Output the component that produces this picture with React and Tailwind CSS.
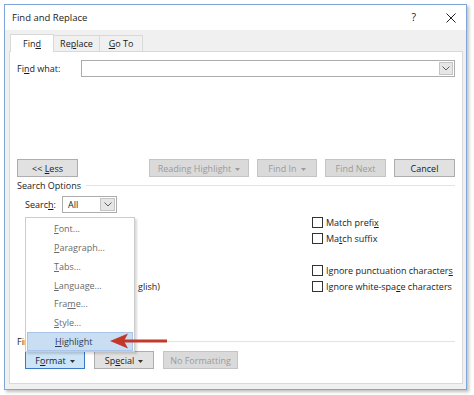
import React from "react";

const U = ({ children }) => <span className="underline underline-offset-[1px]">{children}</span>;

const Caret = ({ color = "#333" }) => (
  <svg width="5" height="3" viewBox="0 0 5 3" className="ml-[4px] inline-block">
    <path d="M0 0 L5 0 L2.5 3 Z" fill={color} />
  </svg>
);

const Chevron = () => (
  <svg width="8" height="5" viewBox="0 0 8 5">
    <path d="M0.5 0.5 L4 4 L7.5 0.5" fill="none" stroke="#606060" strokeWidth="1" />
  </svg>
);

const Button = ({ children, w, disabled, active }) => {
  let cls = "bg-[#e1e1e1] border-[#adadad] text-[#1b1b1b]";
  if (disabled) cls = "bg-[#dadada] border-[#c4c4c4] text-[#9a9a9a]";
  if (active) cls = "bg-[#cce4f7] border-[#3a78c4] text-[#1b1b1b]";
  return (
    <div
      className={`h-[18px] border flex items-center justify-center ${cls}`}
      style={{ width: w }}
    >
      <span className="whitespace-pre">{children}</span>
    </div>
  );
};

const Box = () => <div className="w-[11px] h-[11px] border border-[#333] bg-white shrink-0" />;

const Check = ({ children }) => (
  <div className="h-[16px] flex items-center gap-[3px] whitespace-nowrap">
    <Box />
    <span>{children}</span>
  </div>
);

const menuItems = [
  <><U>F</U>ont...</>,
  <><U>P</U>aragraph...</>,
  <><U>T</U>abs...</>,
  <><U>L</U>anguage...</>,
  <>Fra<U>m</U>e...</>,
  <><U>S</U>tyle...</>,
];

export default function App() {
  return (
    <div
      className="w-[474px] h-[395px] bg-white pt-[4px] pl-[4px] text-[9px] text-[#1b1b1b] leading-none"
      style={{ fontFamily: '"Open Sans", "Noto Sans", sans-serif' }}
    >
      <div className="w-[463px] h-[386px] border border-[#7ea6d8] bg-[#f0f0f0] flex flex-col shadow-[2px_2px_3px_rgba(0,0,0,0.25)]">
        {/* title bar */}
        <div className="h-[25px] bg-white flex items-center pl-[7px] pr-[10px] shrink-0">
          <span className="text-[9.5px]">Find and Replace</span>
          <span className="ml-auto mr-[30px] text-[10.5px]">?</span>
          <svg width="10" height="10" viewBox="0 0 10 10">
            <path d="M0.5 0.5 L9.5 9.5 M9.5 0.5 L0.5 9.5" stroke="#222" strokeWidth="1" />
          </svg>
        </div>

        <div className="flex-1 flex flex-col pl-[4px] pr-[3px] pt-[5px] pb-[5px]">
          {/* tabs */}
          <div className="flex h-[17px] -mb-[1px] pl-[1px] shrink-0">
            <div className="w-[44px] h-[18px] -mt-[1px] bg-white border border-b-0 border-[#d9d9d9] z-10 flex items-center justify-center">
              <span>Fin<U>d</U></span>
            </div>
            <div className="w-[46px] border border-l-0 border-[#d9d9d9] flex items-center justify-center">
              <span>Re<U>p</U>lace</span>
            </div>
            <div className="w-[43px] border border-l-0 border-[#d9d9d9] flex items-center justify-center">
              <span><U>G</U>o To</span>
            </div>
          </div>

          {/* panel */}
          <div className="flex-1 bg-white border border-[#d9d9d9] relative flex flex-col px-[7px] pt-[8px]">
            <div className="flex items-center h-[17px]">
              <span className="w-[64px]">
                Fi<U>n</U>d what:
              </span>
              <div className="flex-1 h-[17px] border border-[#acacac] flex justify-end p-[1px]">
                <div className="w-[14px] h-full bg-[#e6e6e6] border border-[#c4c4c4] flex items-center justify-center">
                  <Chevron />
                </div>
              </div>
            </div>

            <div className="flex mt-[82px]">
              <Button w={61}>
                {"<< "}<U>L</U>ess
              </Button>
              <div className="ml-auto flex gap-[8px]">
                <Button w={100} disabled>
                  Reading Highlight<Caret color="#9a9a9a" />
                </Button>
                <Button w={60} disabled>
                  Find In<Caret color="#9a9a9a" />
                </Button>
                <Button w={61} disabled>
                  Find Next
                </Button>
                <Button w={61}>Cancel</Button>
              </div>
            </div>

            <div className="flex items-center h-[14px] mt-[1px] gap-[5px]">
              <span>Search Options</span>
              <div className="flex-1 h-px bg-[#e3e3e3]" />
            </div>

            <div className="flex items-center h-[17px] mt-[4px] pl-[8px]">
              <span className="w-[37px]">
                Searc<U>h</U>:
              </span>
              <div className="w-[55px] h-[17px] border border-[#acacac] flex items-center p-[1px]">
                <span className="pl-[4px] flex-1">All</span>
                <div className="w-[15px] h-full bg-[#e6e6e6] border border-[#c4c4c4] flex items-center justify-center">
                  <Chevron />
                </div>
              </div>
            </div>

            <div className="grid grid-cols-[287px_1fr] mt-[1px] pl-[8px]">
              {/* left column: mostly hidden under the Format menu */}
              <div className="flex flex-col">
                <div className="h-[16px] flex items-center">
                  <Box />
                </div>
                <div className="h-[16px]" />
                <div className="h-[16px]" />
                <div className="h-[16px]" />
                <div className="h-[16px] flex items-center pl-[113px]">
                  <span>glish)</span>
                </div>
              </div>
              <div className="flex flex-col">
                <Check>
                  Match prefi<U>x</U>
                </Check>
                <Check>
                  Ma<U>t</U>ch suffix
                </Check>
                <div className="h-[16px]" />
                <Check>
                  Ignore punctuation character<U>s</U>
                </Check>
                <Check>
                  Ignore white-spa<U>c</U>e characters
                </Check>
              </div>
            </div>

            <div className="flex items-center h-[14px] mt-[40px] gap-[5px]">
              <span>Find</span>
              <div className="flex-1 h-px bg-[#e3e3e3]" />
            </div>

            <div className="flex gap-[9px] mt-[3px] pl-[8px]">
              <Button w={60} active>
                F<U>o</U>rmat<Caret />
              </Button>
              <Button w={60}>
                Sp<U>e</U>cial<Caret />
              </Button>
              <Button w={75} disabled>
                No Formatting
              </Button>
            </div>

            {/* format dropdown menu */}
            <div className="absolute left-[15px] top-[165px] w-[110px] h-[135px] bg-white border border-[#cccccc] shadow-[2px_2px_2px_rgba(0,0,0,0.15)] flex flex-col pt-[1px] px-[1px] z-20">
              {menuItems.map((m, i) => (
                <div key={i} className="h-[19px] flex items-center pl-[27px] text-[#6a6a6a]">
                  <span>{m}</span>
                </div>
              ))}
              <div className="h-[19px] flex items-center pl-[27px] text-[#2f3b52] bg-[#c9ddf3] border border-[#a9c6ea]">
                <span><U>H</U>ighlight</span>
              </div>
            </div>

            {/* red arrow */}
            <svg
              className="absolute left-[99px] top-[280px] z-30"
              width="58"
              height="18"
              viewBox="0 0 58 18"
            >
              <path d="M14 9 L58 9" stroke="#c0392b" strokeWidth="3" />
              <path d="M1 9 L19 1.5 L15 9 L19 16.5 Z" fill="#c0392b" />
            </svg>
          </div>
        </div>
      </div>
    </div>
  );
}
